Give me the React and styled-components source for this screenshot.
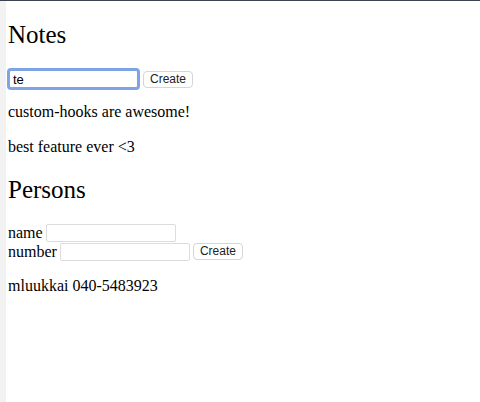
import React, { useState } from 'react';
import styled, { createGlobalStyle } from 'styled-components';

const GlobalStyle = createGlobalStyle`
  html {
    border-top: 1px solid #3b4350;
    background: #fff;
  }
  body {
    margin: 0;
    min-height: 401px;
    font-family: "Liberation Serif", "Times New Roman", serif;
    font-size: 16px;
    color: #000;
  }
`;

const Frame = styled.div`
  display: flex;
  min-height: 401px;
`;

const Gutter = styled.div`
  width: 6px;
  flex: none;
  background: #f2f2f2;
`;

const Page = styled.div`
  flex: 1;
  padding: 0 8px 0 2px;
  display: flow-root;
`;

const Heading = styled.h2`
  font-size: 25px;
  font-weight: normal;
  margin: ${props => props.top || '20px'} 0 ${props => props.bottom || '19px'};
  line-height: 28px;
`;

const Form = styled.form`
  margin: 0;
`;

const Row = styled.div`
  display: flex;
  align-items: center;
  gap: 3px;
  height: ${props => props.tall ? '22px' : '19px'};
  line-height: 19px;
`;

const Input = styled.input`
  box-sizing: border-box;
  width: ${props => props.focused ? '133px' : '130px'};
  height: ${props => props.focused ? '22px' : '18px'};
  margin: ${props => props.focused ? '0 0 0 -1px' : '0'};
  padding: 0 3px;
  font-family: "Liberation Sans", Arial, sans-serif;
  font-size: 13px;
  color: #000;
  background: #fff;
  border: ${props => props.focused ? '3px solid #7fa4e3' : '1px solid #dcdcdc'};
  border-radius: ${props => props.focused ? '4px' : '2px'};
  outline: none;
  caret-color: #000;
`;

const Button = styled.button`
  box-sizing: border-box;
  height: 17px;
  padding: 0 6px;
  font-family: "Liberation Sans", Arial, sans-serif;
  font-size: 12px;
  line-height: 15px;
  color: #222;
  background: #fff;
  border: 1px solid #d6d6d6;
  border-radius: 4px;
`;

const Note = styled.p`
  margin: 13px 0 17px;
  line-height: 18px;
`;

const Label = styled.span`
  line-height: 19px;
`;

const Person = styled.p`
  margin: 16px 0;
  line-height: 18px;
`;

const App = () => {
  const [content, setContent] = useState('te');
  const notes = ['custom-hooks are awesome!', 'best feature ever <3'];
  const persons = [{ name: 'mluukkai', number: '040-5483923' }];

  return (
    <>
      <GlobalStyle />
      <Frame>
        <Gutter />
        <Page>
          <Heading top="20px" bottom="19px">Notes</Heading>
          <Form onSubmit={e => e.preventDefault()}>
            <Row tall>
              <Input focused value={content} onChange={e => setContent(e.target.value)} />
              <Button>Create</Button>
            </Row>
          </Form>
          {notes.map(n => <Note key={n}>{n}</Note>)}

          <Heading>Persons</Heading>
          <Form onSubmit={e => e.preventDefault()}>
            <Row>
              <Label>name</Label>
              <Input />
            </Row>
            <Row>
              <Label>number</Label>
              <Input />
              <Button>Create</Button>
            </Row>
          </Form>
          {persons.map(p => <Person key={p.name}>{p.name} {p.number}</Person>)}
        </Page>
      </Frame>
    </>
  );
};

export default App;
